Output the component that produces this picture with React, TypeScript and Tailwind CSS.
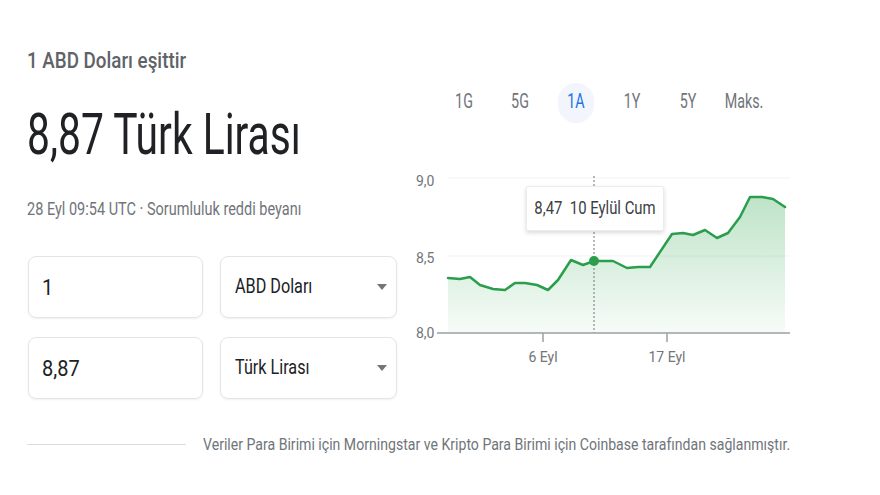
import React from "react";

const points: [number, number][] = [
  [448, 278], [460, 279], [470, 277], [480, 285], [493, 289], [505, 290],
  [515, 283], [525, 283], [537, 285], [548, 290], [558, 280], [571, 260],
  [583, 265], [594, 261], [613, 261], [627, 268], [638, 267], [650, 267],
  [672, 234], [683, 233], [693, 235], [705, 230], [717, 238], [728, 233],
  [740, 217], [750, 197], [762, 197], [773, 199], [785, 207],
];

const tabs = ["1G", "5G", "1A", "1Y", "5Y", "Maks."];

function Chart() {
  const line = points.map(([x, y], i) => `${i ? "L" : "M"}${x} ${y}`).join(" ");
  const area = `${line} L785 333 L448 333 Z`;
  return (
    <svg width="475" height="210" viewBox="405 165 475 210" className="block">
      <defs>
        <linearGradient id="fill" x1="0" y1="0" x2="0" y2="1">
          <stop offset="0%" stopColor="#34a853" stopOpacity="0.32" />
          <stop offset="100%" stopColor="#34a853" stopOpacity="0.04" />
        </linearGradient>
      </defs>
      <line x1="448" y1="178" x2="790" y2="178" stroke="#f1f3f4" strokeWidth="1" />
      <line x1="448" y1="256" x2="790" y2="256" stroke="#f1f3f4" strokeWidth="1" />
      <g fill="#70757a" fontSize="14" fontFamily="Roboto, sans-serif">
        <text x="416" y="186">9,0</text>
        <text x="416" y="263">8,5</text>
        <text x="416" y="338">8,0</text>
        <text x="543" y="362" textAnchor="middle">6 Eyl</text>
        <text x="667" y="362" textAnchor="middle">17 Eyl</text>
      </g>
      <path d={area} fill="url(#fill)" />
      <line x1="594" y1="176" x2="594" y2="333" stroke="#70757a" strokeWidth="1" strokeDasharray="2 2" />
      <path d={line} fill="none" stroke="#2a9e4c" strokeWidth="2.5" strokeLinejoin="round" strokeLinecap="round" />
      <line x1="437" y1="333" x2="790" y2="333" stroke="#9aa0a6" strokeWidth="1.5" />
      <line x1="543" y1="333" x2="543" y2="342" stroke="#9aa0a6" strokeWidth="1.5" />
      <line x1="667" y1="333" x2="667" y2="342" stroke="#9aa0a6" strokeWidth="1.5" />
      <circle cx="594" cy="261" r="5" fill="#2a9e4c" />
    </svg>
  );
}

function Caret() {
  return (
    <svg width="10" height="6" viewBox="0 0 10 6">
      <path d="M0 0h10L5 6z" fill="#757575" />
    </svg>
  );
}

export default function App() {
  return (
    <div className="w-[880px] h-[495px] overflow-hidden bg-white font-['Roboto',sans-serif]">
      <div className="flex">
        {/* left: converter */}
        <div className="w-[405px] pl-[27px]">
          <div className="mt-[47px] h-[28px] leading-[28px] text-[18.8px] font-medium text-[#5f6368]">
            <span className="inline-block scale-y-[1.18]">1 ABD Doları eşittir</span>
          </div>
          <div className="mt-[33px] h-[52px] leading-[52px] text-[40.8px] text-[#202124]">
            <span className="inline-block scale-y-[1.42]">8,87 Türk Lirası</span>
          </div>
          <div className="mt-[40px] h-[20px] leading-[20px] text-[14.5px] text-[#70757a]">
            <span className="inline-block scale-y-[1.28]">28 Eyl 09:54 UTC · Sorumluluk reddi beyanı</span>
          </div>

          <div className="mt-[36px] flex flex-col gap-[19px] pl-px">
            {[
              ["1", "ABD Doları"],
              ["8,87", "Türk Lirası"],
            ].map(([value, currency]) => (
              <div key={currency} className="flex gap-[17px]">
                <div className="flex h-[62px] w-[175px] items-center rounded-[8px] border border-[#e3e4e6] pl-[13px] shadow-[0_1px_2px_rgba(60,64,67,0.08)]">
                  <span className="inline-block scale-y-[1.1] text-[20px] leading-[24px] text-[#202124]">{value}</span>
                </div>
                <div className="flex h-[62px] w-[177px] items-center justify-between rounded-[8px] border border-[#e3e4e6] pl-[14px] pr-[9px] shadow-[0_1px_2px_rgba(60,64,67,0.08)]">
                  <span className="inline-block scale-y-[1.2] text-[16.2px] leading-[20px] text-[#202124]">{currency}</span>
                  <Caret />
                </div>
              </div>
            ))}
          </div>
        </div>

        {/* right: chart */}
        <div className="relative w-[475px]">
          <div className="mt-[83px] flex h-[40px] pl-[31px]">
            {tabs.map((t) => (
              <div key={t} className="flex w-[56px] items-center justify-center">
                <span
                  className={
                    t === "1A"
                      ? "flex h-[40px] w-[36px] items-center justify-center rounded-full bg-[#f2f5fc] text-[14.3px] text-[#1a73e8]"
                      : "flex h-[40px] items-center justify-center text-[14.3px] text-[#70757a]"
                  }
                >
                  <span className="inline-block scale-y-[1.35]">{t}</span>
                </span>
              </div>
            ))}
          </div>
          <div className="mt-[42px]">
            <Chart />
          </div>
          <div className="absolute left-[121px] top-[186px] flex h-[45px] w-[138px] items-center justify-center rounded-[2px] border border-[#ececec] bg-white text-[14.9px] text-[#3c4043] shadow-[0_2px_4px_rgba(0,0,0,0.15)]">
            <span className="inline-block scale-y-[1.25] whitespace-pre">8,47  10 Eylül Cum</span>
          </div>
        </div>
      </div>

      {/* attribution */}
      <div className="mt-[35px] flex h-[20px] items-center pl-[27px]">
        <div className="h-px w-[159px] bg-[#dadce0]" />
        <span className="ml-[17px] inline-block scale-y-[1.12] whitespace-nowrap text-[14.1px] leading-[20px] text-[#70757a]">
          Veriler Para Birimi için Morningstar ve Kripto Para Birimi için Coinbase tarafından sağlanmıştır.
        </span>
      </div>
    </div>
  );
}
